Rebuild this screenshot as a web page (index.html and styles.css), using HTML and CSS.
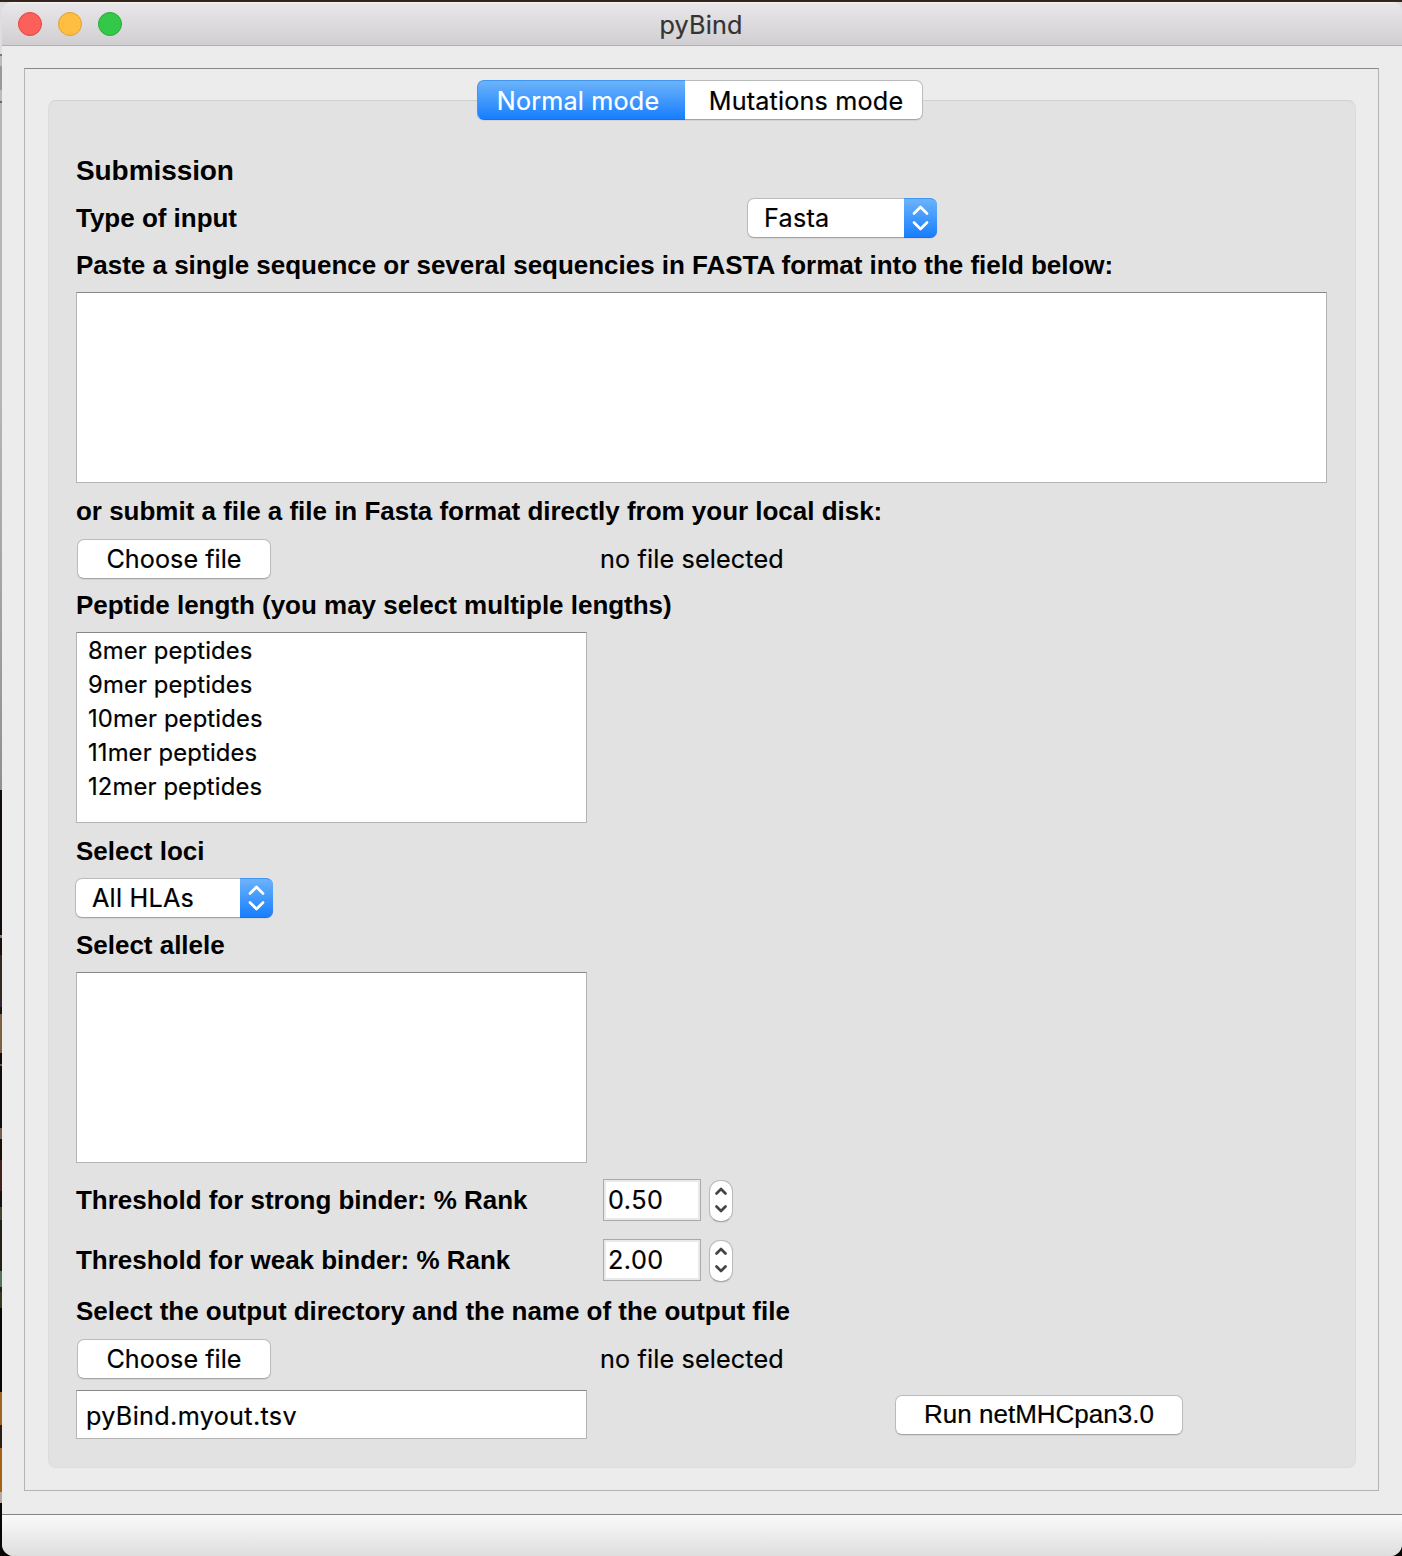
FILE: index.html
```html
<!DOCTYPE html>
<html lang="en">
<head>
<meta charset="utf-8">
<title>pyBind</title>
<link rel="stylesheet" href="styles.css">
</head>
<body>
<div class="window">
  <header class="titlebar">
    <div class="lights"><span class="light close"></span><span class="light minimize"></span><span class="light expand"></span></div>
    <h1 class="title">pyBind</h1>
  </header>
  <main class="content">
    <div class="frame">
      <nav class="tabs"><button class="tab active">Normal mode</button><button class="tab">Mutations mode</button></nav>
      <section class="panel">
        <h2 class="label heading">Submission</h2>
        <div class="row">
          <div class="label type-label">Type of input</div>
          <div class="select fasta">Fasta<i class="arrows"><svg width="33" height="40" viewBox="0 0 33 40"><path d="M10 15.5 16.5 9 23 15.5M10 24.5 16.5 31 23 24.5"/></svg></i></div>
        </div>
        <div class="label paste">Paste a single sequence or several sequencies in FASTA format into the field below:</div>
        <div class="box wide"></div>
        <div class="label after-box">or submit a file a file in Fasta format directly from your local disk:</div>
        <div class="row"><button class="button choose">Choose file</button><span class="status">no file selected</span></div>
        <div class="label peptide">Peptide length (you may select multiple lengths)</div>
        <ul class="box list">
          <li>8mer peptides</li>
          <li>9mer peptides</li>
          <li>10mer peptides</li>
          <li>11mer peptides</li>
          <li>12mer peptides</li>
        </ul>
        <div class="label after-box">Select loci</div>
        <div class="row loci"><div class="select hla">All HLAs<i class="arrows"><svg width="33" height="40" viewBox="0 0 33 40"><path d="M10 15.5 16.5 9 23 15.5M10 24.5 16.5 31 23 24.5"/></svg></i></div></div>
        <div class="label allele">Select allele</div>
        <div class="box"></div>
        <div class="thresholds">
          <div class="label">Threshold for strong binder: % Rank</div>
          <div class="spin"><span class="number">0.50</span><i class="stepper"><svg width="22" height="40" viewBox="0 0 22 40"><path d="M6.5 13.5 11 9 15.5 13.5M6.5 26.5 11 31 15.5 26.5"/></svg></i></div>
          <div class="label">Threshold for weak binder: % Rank</div>
          <div class="spin"><span class="number">2.00</span><i class="stepper"><svg width="22" height="40" viewBox="0 0 22 40"><path d="M6.5 13.5 11 9 15.5 13.5M6.5 26.5 11 31 15.5 26.5"/></svg></i></div>
        </div>
        <div class="label output">Select the output directory and the name of the output file</div>
        <div class="row"><button class="button choose">Choose file</button><span class="status">no file selected</span></div>
        <div class="row final"><div class="box filename">pyBind.myout.tsv</div><button class="button run">Run netMHCpan3.0</button></div>
      </section>
    </div>
  </main>
  <footer class="statusbar"></footer>
</div>
</body>
</html>
```
FILE: styles.css
```css
* { box-sizing: border-box; }
body {
  margin: 0;
  height: 1556px;
  padding: 2px 0 0 2px;
  overflow: hidden;
  background:
    linear-gradient(#302019, #3b291b) 0 0 / 100% 2px no-repeat,
    linear-gradient(#dedede 0 54px, #777 54px 56px, #bcbcbc 56px 66px, #999 66px 90px, #bbb 90px 101px, #666 101px 103px, #b5b5b5 103px 400px, #909090 790px, #120d0b 790px 935px, #8a7c72 935px 938px, #18100d 938px 955px, #35291f 955px 1001px, #352448 1001px 1007px, #1c1410 1007px 1014px, #7c6040 1014px 1053px, #120d0b 1053px 1064px, #6a5848 1064px 1066px, #120d0b 1066px 1128px, #755c4b 1128px 1139px, #170d09 1139px 1160px, #45201a 1160px 1191px, #160f0b 1191px 1207px, #3d482b 1207px 1220px, #241e16 1220px 1271px, #4f7460 1271px 1287px, #242219 1287px 1292px, #38361f 1292px 1308px, #080604 1308px 1392px, #9d6621 1392px 1425px, #2c1e13 1425px 1448px, #a86114 1448px 1492px, #b6aaa0 1492px 1503px, #090706 1503px) 0 0 / 2px 100% no-repeat,
    linear-gradient(#dcdcdc, #dcdcdc) 0 0 / 100% 20px no-repeat,
    #080706;
  font: 25.2px/30px Inter, sans-serif;
  letter-spacing: .14px;
  color: #000;
  -webkit-text-stroke: .2px;
}
.window { height: 1554px; width: 1400px; border-radius: 10px 10px 12px 12px; overflow: hidden; background: #ececec; display: flex; flex-direction: column; }
.titlebar { height: 44px; flex: none; display: grid; grid-template-columns: 1fr auto 1fr; align-items: center; padding-left: 16px; background: linear-gradient(#f5f4f5, #e8e6e8 2px, #d1cfd1 42px); border-bottom: 1px solid #b1afb1; }
.lights { display: flex; gap: 16px; }
.light { width: 24px; height: 24px; border-radius: 50%; border: 1px solid #e2463f; background: #fc605b; }
.minimize { background: #fdbe41; border-color: #dfa033; }
.expand { background: #34c84a; border-color: #27aa35; }
.title { margin: 2px 18px 0 0; font-size: 25.2px; font-weight: 400; color: #333; }
.content { flex: 1; padding: 22px 23px 23px 22px; }
.frame { height: 1423px; border: 1px solid #b4b4b4; border-top-color: #888; padding: 11px 22px 22px 23px; display: flex; flex-direction: column; }
.tabs { position: relative; z-index: 1; align-self: center; display: flex; height: 40px; margin: 0 4px -20px 0; letter-spacing: .17px; }
button { font: inherit; letter-spacing: inherit; color: inherit; padding: 0; }
.tab { border: 1px solid #bbb; border-left: 0; border-bottom-color: #a5a5a5; background: #fff; width: 238px; border-radius: 0 7px 7px 0; box-shadow: 0 1px 1px #0001; padding: 2px 0 0 5px; }
.tab.active { width: 208px; border: 1px solid #3f97f5; border-right: 0; border-bottom-color: #166ff5; border-radius: 7px 0 0 7px; background: linear-gradient(#6cb3fa, #177efe); color: #fff; padding: 2px 7px 0 0; }
.panel { height: 1368px; background: #e2e2e2; border: 1px solid #dcdcdc; border-top-color: #d0d0d0; border-radius: 8px; padding: 45px 27px 0; }
.label { font: bold 26px/30px "Liberation Sans", Arial, sans-serif; letter-spacing: -.02px; -webkit-text-stroke: 0; display: flex; align-items: center; height: 48px; margin: 0; white-space: nowrap; }
.heading { font-size: 28px; padding-top: 2px; letter-spacing: -.08px; }
.row { display: flex; align-items: center; height: 48px; }
.type-label { width: 671px; }
.select { display: flex; align-items: center; justify-content: space-between; height: 40px; background: #fff; border: 1px solid #bbb; border-bottom-color: #a5a5a5; border-radius: 7px; padding-left: 16px; box-shadow: 0 1px 1px #0001; }
.fasta { width: 190px; letter-spacing: .25px; }
.hla { width: 198px; margin-left: -1px; letter-spacing: .22px; }
.arrows { width: 33px; height: 40px; margin-right: -1px; border-radius: 0 7px 7px 0; background: linear-gradient(#6cb3fa, #177efe); border: solid #3f97f5; border-width: 1px 0; border-bottom-color: #166ff5; }
.arrows svg, .stepper svg { display: block; fill: none; stroke: #fff; stroke-width: 2.7; stroke-linecap: round; stroke-linejoin: round; margin-top: -1px; }
.paste { height: 46px; margin-bottom: 4px; }
.box { width: 511px; height: 191px; background: #fff; border: 1px solid #b4b4b4; border-top-color: #888; margin: 0; }
.wide { width: 1251px; }
.after-box { margin-top: 4px; }
.button { height: 40px; background: #fff; border: 1px solid #bbb; border-bottom-color: #a5a5a5; border-radius: 7px; box-shadow: 0 1px 1px #0001; }
.choose { width: 194px; margin: 0 329px 0 1px; letter-spacing: .04px; }
.peptide { height: 44px; margin-bottom: 5px; }
.list { list-style: none; padding: 1px 0 0 11px; font-size: 23.8px; line-height: 34px; }
.loci { margin-top: -1px; }
.allele { height: 46px; margin-bottom: 4px; }
.thresholds { display: grid; grid-template-columns: 527px 130px; grid-auto-rows: 60px; align-items: center; margin-top: 7px; }
.spin { display: flex; align-items: center; justify-content: space-between; }
.number { width: 98px; height: 42px; border: 1px solid #aaa; background: #fff; box-shadow: inset 0 0 0 2px #e9e9e9; padding: 5px 0 0 4px; letter-spacing: .5px; }
.stepper { width: 24px; height: 42px; border: 1px solid #bbb; border-bottom-color: #a5a5a5; border-radius: 11px; background: #fff; margin-top: 2px; box-shadow: 0 1px 1px #0001; }
.stepper svg { stroke: #444; margin-top: -1px; }
.output { height: 42px; margin-bottom: 3px; }
.final { margin-top: 7px; height: 49px; }
.filename { height: 49px; display: flex; align-items: center; padding: 2px 0 0 9px; letter-spacing: .33px; }
.run { width: 288px; margin-left: 308px; padding-bottom: 2px; font: 26px/30px "Liberation Sans", Arial, sans-serif; letter-spacing: 0; }
.statusbar { height: 42px; flex: none; border-top: 1px solid #858585; background: linear-gradient(#fafafa, #dedede); }
```
